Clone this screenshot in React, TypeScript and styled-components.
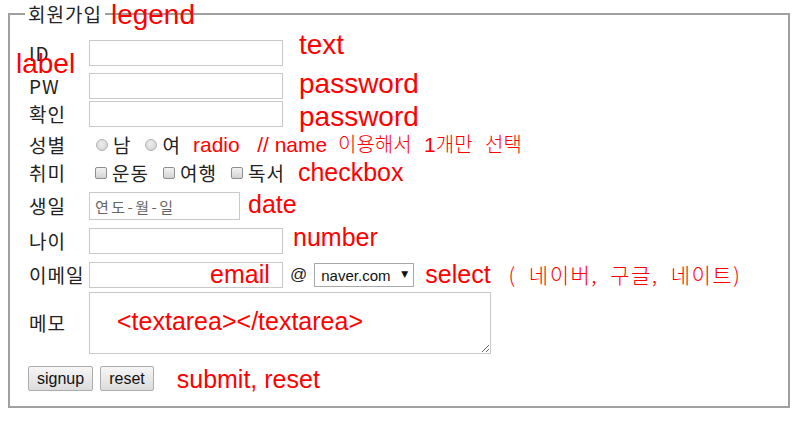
import React from "react";
import styled, { createGlobalStyle } from "styled-components";

const KO = `"Noto Sans CJK KR", "Liberation Sans", sans-serif`;
const NOTE = `"Liberation Sans", "Noto Sans CJK KR", sans-serif`;

const GlobalStyle = createGlobalStyle`
  html, body {
    margin: 0;
    background: #fff;
  }
  body {
    width: 800px;
    height: 430px;
    overflow: hidden;
  }
`;

const Form = styled.form`
  padding: 2px 10px 0 8px;
`;

const Fieldset = styled.fieldset`
  margin: 0;
  padding: 14px 19px 15px 19px;
  border: 2px solid #a0a0a0;
  font-family: ${KO};
  color: #222;
`;

const Legend = styled.legend`
  position: relative;
  margin-left: -4px;
  padding: 0 3px 0 3px;
  font-size: 19px;
  line-height: 24px;
  letter-spacing: 1px;
`;

const Row = styled.div<{ $h: number; $mt?: number }>`
  display: flex;
  align-items: center;
  height: ${(p) => p.$h}px;
  margin-top: ${(p) => p.$mt ?? 0}px;
`;

const Label = styled.label`
  position: relative;
  align-self: stretch;
  display: flex;
  align-items: center;
  flex: none;
  width: 60px;
  font-size: 19px;
  line-height: 22px;
  letter-spacing: 1px;
`;

// red annotation text that follows a control in the row
const Note = styled.span<{ $size: number; $top: number; $gap: number }>`
  align-self: flex-start;
  margin-top: ${(p) => p.$top}px;
  margin-left: ${(p) => p.$gap}px;
  font-family: ${NOTE};
  font-size: ${(p) => p.$size}px;
  line-height: 1;
  color: #ff0000;
  white-space: pre;
`;

// red annotation laid over a control or border
const OverNote = styled.span<{ $left: string; $top: number; $size?: number }>`
  position: absolute;
  left: ${(p) => p.$left};
  top: ${(p) => p.$top}px;
  font-family: ${NOTE};
  font-size: ${(p) => p.$size ?? 28}px;
  line-height: 1;
  letter-spacing: 0;
  color: #ff0000;
  white-space: pre;
  pointer-events: none;
`;

const Ko = styled.span<{ $size: number; $gap?: number; $spread?: number; $words?: number }>`
  margin-left: ${(p) => p.$gap ?? 0}px;
  font-family: ${KO};
  font-size: ${(p) => p.$size}px;
  font-weight: 300;
  letter-spacing: ${(p) => p.$spread ?? 0}px;
  word-spacing: ${(p) => p.$words ?? 0}px;
`;

const Field = styled.input<{ $w: number; $h?: number }>`
  box-sizing: border-box;
  width: ${(p) => p.$w}px;
  height: ${(p) => p.$h ?? 26}px;
  margin: 0;
  padding: 1px 5px;
  border: 1px solid #c9c9c9;
  background: #fff;
  font-family: ${KO};
  font-size: 15px;
  color: #444;
  outline: none;

  &::placeholder {
    color: #666;
    letter-spacing: 2.5px;
  }
`;

const Overlay = styled.div`
  position: relative;
  display: flex;
  align-items: center;
`;

const Choices = styled.div<{ $indent: number }>`
  display: flex;
  align-items: center;
  gap: 14px;
  padding-left: ${(p) => p.$indent}px;
`;

const Choice = styled.label`
  display: flex;
  align-items: center;
  gap: 5px;
  font-size: 19px;
  line-height: 22px;
  letter-spacing: 1px;
`;

const Radio = styled.input`
  appearance: none;
  box-sizing: border-box;
  width: 12px;
  height: 12px;
  margin: 0;
  border: 1px solid #b3b3b3;
  border-radius: 50%;
  background: radial-gradient(circle at 45% 40%, #eeeeee, #cdcdcd);
`;

const Check = styled.input`
  appearance: none;
  box-sizing: border-box;
  width: 12px;
  height: 12px;
  margin: 0;
  border: 1px solid #8f8f8f;
  border-radius: 2px;
  background: linear-gradient(#f2f2f2, #d3d3d3);
`;

const At = styled.span`
  margin: 0 7px 0 7px;
  font-family: "Liberation Sans", sans-serif;
  font-size: 17px;
`;

const Select = styled.select`
  appearance: none;
  box-sizing: border-box;
  width: 100px;
  height: 24px;
  margin: 0;
  padding: 0 0 0 6px;
  border: 1px solid #a9a9a9;
  border-radius: 0;
  background: #fff;
  font-family: "Liberation Sans", sans-serif;
  font-size: 15px;
  color: #111;
`;

const Arrow = styled.span`
  position: absolute;
  right: 6px;
  top: 7px;
  font-family: "DejaVu Sans", sans-serif;
  font-size: 9px;
  line-height: 1;
  color: #111;
  pointer-events: none;
`;

const Memo = styled.textarea`
  box-sizing: border-box;
  width: 402px;
  height: 62px;
  margin: 0;
  border: 1px solid #c9c9c9;
  outline: none;
`;

const Button = styled.button`
  box-sizing: border-box;
  height: 25px;
  margin: 0;
  padding: 0 8px;
  border: 1px solid #adadad;
  border-radius: 2px;
  background: linear-gradient(#f6f6f6, #dcdcdc);
  font-family: "Liberation Sans", sans-serif;
  font-size: 16px;
  color: #111;
`;

const Buttons = styled.div`
  display: flex;
  gap: 7px;
  margin-left: -1px;
`;

export default function App() {
  return (
    <>
      <GlobalStyle />
      <Form onSubmit={(e) => e.preventDefault()}>
        <Fieldset>
          <Legend>
            회원가입
            <OverNote $left="calc(100% + 6px)" $top={-1}>legend</OverNote>
          </Legend>

          <Row $h={26}>
            <Label htmlFor="uid">
              ID
              <OverNote $left="-13px" $top={10}>label</OverNote>
            </Label>
            <Field id="uid" type="text" $w={194} />
            <Note $size={28} $top={-9} $gap={16}>text</Note>
          </Row>
          <Row $h={26} $mt={7}>
            <Label htmlFor="upw">PW</Label>
            <Field id="upw" type="password" $w={194} />
            <Note $size={28} $top={-3} $gap={16}>password</Note>
          </Row>
          <Row $h={26} $mt={2}>
            <Label htmlFor="upw2">확인</Label>
            <Field id="upw2" type="password" $w={194} />
            <Note $size={28} $top={2} $gap={16}>password</Note>
          </Row>

          <Row $h={22} $mt={7}>
            <Label>성별</Label>
            <Choices $indent={7}>
              <Choice>
                <Radio type="radio" name="gender" value="m" />남
              </Choice>
              <Choice>
                <Radio type="radio" name="gender" value="f" />여
              </Choice>
            </Choices>
            <Note $size={21} $top={0} $gap={12}>
              {"radio   // name "}
              <Ko $size={20} $gap={5} $words={8}>이용해서 </Ko>1<Ko $size={20} $words={8}>개만 선택</Ko>
            </Note>
          </Row>
          <Row $h={22} $mt={6}>
            <Label>취미</Label>
            <Choices $indent={6}>
              <Choice>
                <Check type="checkbox" name="hobby" value="sport" />운동
              </Choice>
              <Choice>
                <Check type="checkbox" name="hobby" value="travel" />여행
              </Choice>
              <Choice>
                <Check type="checkbox" name="hobby" value="reading" />독서
              </Choice>
            </Choices>
            <Note $size={25} $top={-2} $gap={13}>checkbox</Note>
          </Row>

          <Row $h={28} $mt={8}>
            <Label htmlFor="birth">생일</Label>
            <Field id="birth" type="text" placeholder="연도-월-일" $w={151} $h={28} />
            <Note $size={25} $top={0} $gap={8}>date</Note>
          </Row>
          <Row $h={26} $mt={8}>
            <Label htmlFor="age">나이</Label>
            <Field id="age" type="number" $w={194} />
            <Note $size={25} $top={-3} $gap={10}>number</Note>
          </Row>
          <Row $h={26} $mt={8}>
            <Label htmlFor="email">이메일</Label>
            <Overlay>
              <Field id="email" type="email" $w={194} />
              <OverNote $left="121px" $top={0} $size={25}>email</OverNote>
            </Overlay>
            <At>@</At>
            <Overlay>
              <Select name="domain" defaultValue="naver.com">
                <option value="naver.com">naver.com</option>
                <option value="gmail.com">gmail.com</option>
                <option value="nate.com">nate.com</option>
              </Select>
              <Arrow>▼</Arrow>
            </Overlay>
            <Note $size={25} $top={0} $gap={11}>
              select
              <Ko $size={21} $gap={18} $spread={1.5} $words={6}>( 네이버, 구글, 네이트)</Ko>
            </Note>
          </Row>
          <Row $h={62} $mt={4}>
            <Label htmlFor="memo">메모</Label>
            <Overlay>
              <Memo id="memo" />
              <OverNote $left="28px" $top={17} $size={25}>
                {"<textarea></textarea>"}
              </OverNote>
            </Overlay>
          </Row>

          <Row $h={25} $mt={12}>
            <Buttons>
              <Button type="submit">signup</Button>
              <Button type="reset">reset</Button>
            </Buttons>
            <Note $size={25} $top={1} $gap={23}>submit, reset</Note>
          </Row>
        </Fieldset>
      </Form>
    </>
  );
}
